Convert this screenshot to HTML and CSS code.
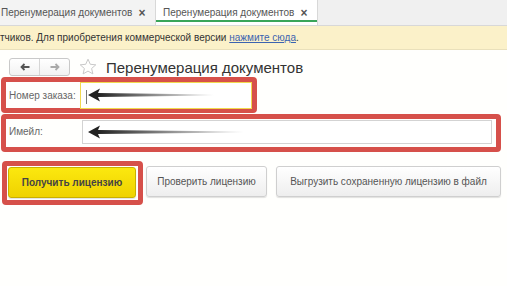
FILE: index.html
```html
<!DOCTYPE html>
<html lang="ru">
<head>
    <meta charset="UTF-8">
    <meta name="viewport" content="width=device-width, initial-scale=1.0">
    <title>Перенумерация документов</title>
    <link rel="stylesheet" href="styles.css">
</head>
<body>
    <!-- Вкладки -->
    <div class="tabs">
        <div class="tab">Перенумерация документов <span class="close">×</span></div>
        <div class="tab active">Перенумерация документов <span class="close">×</span></div>
    </div>

    <!-- Сообщение о версии -->
    <div class="notice">тчиков. Для приобретения коммерческой версии <a href="#">нажмите сюда</a>.</div>

    <div class="form">
        <!-- Заголовок формы -->
        <div class="form-head">
            <div class="nav">
                <span class="nav-btn">
                    <svg width="10" height="8" viewBox="0 0 10 8"><path d="M9.5 4H2M4.5 1L1.5 4l3 3" fill="none" stroke="#555" stroke-width="1.8"/></svg>
                </span>
                <span class="nav-btn">
                    <svg width="10" height="8" viewBox="0 0 10 8"><path d="M0.5 4H8M5.5 1l3 3-3 3" fill="none" stroke="#aaa" stroke-width="1.8"/></svg>
                </span>
            </div>
            <svg class="star" width="18" height="18" viewBox="0 0 18 18"><path d="M9 1.2l2.3 5.1 5.5.5-4.2 3.7 1.3 5.4L9 13.1l-4.9 2.8 1.3-5.4-4.2-3.7 5.5-.5z" fill="none" stroke="#c9c9c9" stroke-width="1"/></svg>
            <h1>Перенумерация документов</h1>
        </div>

        <!-- Номер заказа -->
        <div class="mark mark-order">
            <label>Номер заказа:</label>
            <div class="field focused">
                <span class="caret"></span>
                <svg class="pointer" width="130" height="14" viewBox="0 0 130 14">
                    <defs>
                        <linearGradient id="fade1" x1="0" x2="1" y1="0" y2="0">
                            <stop offset="0" stop-color="#222"/>
                            <stop offset="1" stop-color="#222" stop-opacity="0"/>
                        </linearGradient>
                    </defs>
                    <polygon points="0,7 12,0.5 10,5 10,9 12,13.5" fill="#222"/>
                    <polygon points="10,5 126,6.6 126,7.4 10,9" fill="url(#fade1)"/>
                </svg>
            </div>
        </div>

        <!-- Имейл -->
        <div class="mark mark-mail">
            <label>Имейл:</label>
            <div class="field">
                <svg class="pointer" width="160" height="14" viewBox="0 0 160 14">
                    <defs>
                        <linearGradient id="fade2" x1="0" x2="1" y1="0" y2="0">
                            <stop offset="0" stop-color="#222"/>
                            <stop offset="1" stop-color="#222" stop-opacity="0"/>
                        </linearGradient>
                    </defs>
                    <polygon points="0,7 12,0.5 10,5 10,9 12,13.5" fill="#222"/>
                    <polygon points="10,5 156,6.6 156,7.4 10,9" fill="url(#fade2)"/>
                </svg>
            </div>
        </div>

        <!-- Кнопки -->
        <div class="actions">
            <div class="mark mark-btn">
                <button class="btn btn-main">Получить лицензию</button>
            </div>
            <button class="btn btn-check">Проверить лицензию</button>
            <button class="btn btn-save">Выгрузить сохраненную лицензию в файл</button>
        </div>
    </div>
</body>
</html>
```

FILE: styles.css
```css
/* Общее */
body {
    margin: 0;
    font-family: "Liberation Sans", Arial, sans-serif;
    font-size: 10px;
    color: #333;
    background-color: #fffffd;
}

/* Вкладки */
.tabs {
    display: flex;
    height: 25px;
    background-color: #f0f0f0;
    border-bottom: 1px solid #d8d8d8;
}

.tab {
    display: flex;
    align-items: center;
    gap: 6px;
    height: 25px;
    box-sizing: border-box;
    color: #555;
    border-right: 1px solid #d8d8d8;
}

.tab:first-child {
    width: 156px;
    padding-left: 1px;
    background-color: #f3f3f3;
}

.tab.active {
    width: 162px;
    padding-left: 7px;
    background-color: #fff;
    box-shadow: inset 0 -3px 0 #fff, inset 0 -5px 0 #3aa55a;
}

.close {
    font-size: 12px;
    font-weight: bold;
    color: #555;
}

/* Сообщение */
.notice {
    height: 23px;
    line-height: 24px;
    background-color: #fbf1c9;
    border-bottom: 1px solid #e9e0bb;
    color: #333;
    white-space: nowrap;
}

.notice a {
    color: #3b63b0;
}

/* Форма */
.form {
    padding-top: 8px;
}

.form-head {
    display: flex;
    align-items: center;
    height: 18px;
    padding-left: 9px;
}

.nav {
    display: flex;
    height: 18px;
    box-sizing: border-box;
    border: 1px solid #c9c9c9;
    border-radius: 3px;
    background: linear-gradient(#fff, #f2f2f2);
}

.nav-btn {
    width: 29px;
    display: flex;
    align-items: center;
    justify-content: center;
}

.nav-btn + .nav-btn {
    border-left: 1px solid #d6d6d6;
}

.star {
    margin-left: 9px;
}

h1 {
    margin: 0 0 0 9px;
    font-size: 15px;
    font-weight: normal;
    color: #333;
}

/* Выделение красной рамкой */
.mark {
    border: 5px solid #d6504a;
    border-radius: 4px;
    box-sizing: border-box;
    display: flex;
    align-items: center;
}

.mark label {
    color: #666;
    white-space: nowrap;
}

.mark-order {
    width: 256px;
    height: 36px;
    margin: 1px 0 0 1px;
    padding-left: 3px;
}

.mark-order label {
    width: 71px;
}

.mark-mail {
    width: 500px;
    height: 38px;
    margin: 1px 0 0 1px;
    padding: 1px 4px 4px 3px;
}

.mark-mail label {
    width: 73px;
}

.field {
    position: relative;
    flex: 1;
    box-sizing: border-box;
    background-color: #fff;
    border: 1px solid #d3d3d3;
    height: 24px;
}

.field.focused {
    height: 27px;
    border-color: #f1d94e;
}

.caret {
    position: absolute;
    left: 5px;
    top: 7px;
    width: 1px;
    height: 14px;
    background-color: #777;
}

.pointer {
    position: absolute;
    left: 7px;
    top: 50%;
    margin-top: -7px;
}

.mark-mail .pointer {
    left: 5px;
}

/* Кнопки */
.actions {
    display: flex;
    align-items: flex-start;
    margin-top: 9px;
    padding-left: 2px;
}

.mark-btn {
    width: 141px;
    height: 44px;
    padding: 1px 2px 2px 1px;
}

.btn {
    height: 31px;
    box-sizing: border-box;
    font-family: "Liberation Sans", Arial, sans-serif;
    font-size: 10px;
    color: #555;
    border: 1px solid #cfcfcf;
    border-radius: 3px;
    background: linear-gradient(#fff, #eeeeee);
    box-shadow: 0 1px 1px rgba(0, 0, 0, 0.12);
    padding: 0;
}

.btn-main {
    width: 128px;
    font-weight: bold;
    color: #444;
    border-color: #c9b000;
    background: linear-gradient(#fbe80f, #efd200);
}

.btn-check {
    width: 121px;
    margin: 5px 0 0 3px;
}

.btn-save {
    width: 225px;
    margin: 5px 0 0 9px;
}
```
